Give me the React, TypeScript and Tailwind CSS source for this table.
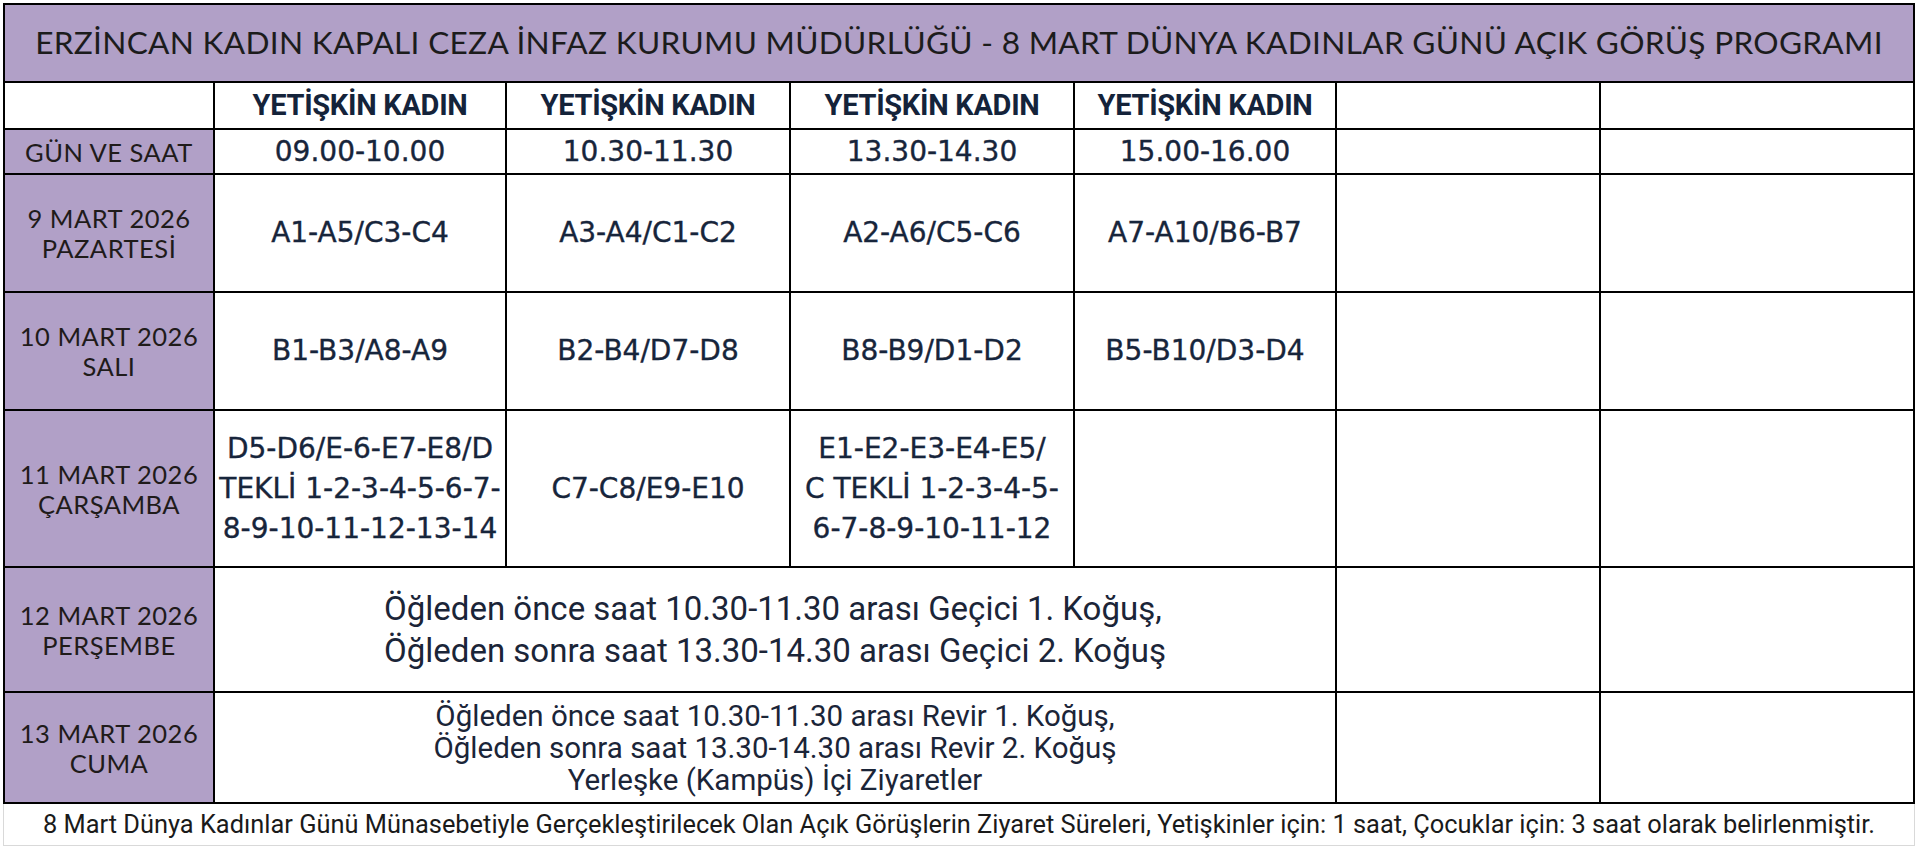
import React from "react";

const slots = ["09.00-10.00", "10.30-11.30", "13.30-14.30", "15.00-16.00"];

const days = [
  { date: "9 MART 2026", name: "PAZARTESİ", groups: ["A1-A5/C3-C4", "A3-A4/C1-C2", "A2-A6/C5-C6", "A7-A10/B6-B7"] },
  { date: "10 MART 2026", name: "SALI", groups: ["B1-B3/A8-A9", "B2-B4/D7-D8", "B8-B9/D1-D2", "B5-B10/D3-D4"] },
];

const label = "font-['Lato',sans-serif] text-[25.5px] leading-[30px] text-[#1f1b1a] tracking-[0.5px]";
const body = "font-['DejaVu_Sans',sans-serif] text-[28px] text-[#17253b] [-webkit-text-stroke:0.35px_#17253b]";
const note = "font-['Roboto',sans-serif] text-[#1b2538]";

function Cell({ purple = false, className = "", children }: { purple?: boolean; className?: string; children?: React.ReactNode }) {
  return (
    <div className={`${purple ? "bg-[#b1a0c7]" : "bg-white"} flex items-center justify-center overflow-hidden ${className}`}>
      {children}
    </div>
  );
}

function DayCell({ date, name }: { date: string; name: string }) {
  return (
    <Cell purple className="flex-col">
      <span className={label}>{date}</span>
      <span className={label}>{name}</span>
    </Cell>
  );
}

export default function App() {
  return (
    <div className="min-h-screen bg-white pt-[3px] pl-[3px]">
      <div className="w-[1912px] grid grid-cols-[208px_290px_282px_282px_260px_262px_312px] grid-rows-[76px_45px_43px_116px_116px_155px_123px_109px] gap-[2px] bg-black p-[2px]">
        {/* title */}
        <Cell purple className="col-span-7">
          <h1 className="font-['Lato',sans-serif] text-[31.6px] text-[#1c1c1c] tracking-[0.3px]">
            ERZİNCAN KADIN KAPALI CEZA İNFAZ KURUMU MÜDÜRLÜĞÜ - 8 MART DÜNYA KADINLAR GÜNÜ AÇIK GÖRÜŞ PROGRAMI
          </h1>
        </Cell>

        {/* header */}
        <Cell />
        {slots.map((s) => (
          <Cell key={s}>
            <span className="font-['Roboto',sans-serif] font-bold text-[29px] text-[#14233a] tracking-[-0.3px]">
              YETİŞKİN KADIN
            </span>
          </Cell>
        ))}
        <Cell />
        <Cell />

        {/* times */}
        <Cell purple>
          <span className={label}>GÜN VE SAAT</span>
        </Cell>
        {slots.map((s) => (
          <Cell key={s}>
            <span className={body}>{s}</span>
          </Cell>
        ))}
        <Cell />
        <Cell />

        {days.map((d) => (
          <React.Fragment key={d.date}>
            <DayCell date={d.date} name={d.name} />
            {d.groups.map((g) => (
              <Cell key={g}>
                <span className={body}>{g}</span>
              </Cell>
            ))}
            <Cell />
            <Cell />
          </React.Fragment>
        ))}

        {/* 11 mart */}
        <DayCell date="11 MART 2026" name="ÇARŞAMBA" />
        <Cell className="flex-col leading-[40px]">
          <span className={`${body} whitespace-nowrap`}>D5-D6/E-6-E7-E8/D</span>
          <span className={`${body} whitespace-nowrap`}>TEKLİ 1-2-3-4-5-6-7-</span>
          <span className={`${body} whitespace-nowrap`}>8-9-10-11-12-13-14</span>
        </Cell>
        <Cell>
          <span className={body}>C7-C8/E9-E10</span>
        </Cell>
        <Cell className="flex-col leading-[40px]">
          <span className={`${body} whitespace-nowrap`}>E1-E2-E3-E4-E5/</span>
          <span className={`${body} whitespace-nowrap`}>C TEKLİ 1-2-3-4-5-</span>
          <span className={`${body} whitespace-nowrap`}>6-7-8-9-10-11-12</span>
        </Cell>
        <Cell />
        <Cell />
        <Cell />

        {/* 12 mart */}
        <DayCell date="12 MART 2026" name="PERŞEMBE" />
        <Cell className="col-span-4">
          <div className={`${note} text-[33px] leading-[42px] text-left`}>
            <p>Öğleden önce saat 10.30-11.30 arası Geçici 1. Koğuş,</p>
            <p>Öğleden sonra saat 13.30-14.30 arası Geçici 2. Koğuş</p>
          </div>
        </Cell>
        <Cell />
        <Cell />

        {/* 13 mart */}
        <DayCell date="13 MART 2026" name="CUMA" />
        <Cell className="col-span-4">
          <div className={`${note} text-[29.5px] leading-[32px] text-center`}>
            <p>Öğleden önce saat 10.30-11.30 arası Revir 1. Koğuş,</p>
            <p>Öğleden sonra saat 13.30-14.30 arası Revir 2. Koğuş</p>
            <p>Yerleşke (Kampüs) İçi Ziyaretler</p>
          </div>
        </Cell>
        <Cell />
        <Cell />
      </div>

      <div className="w-[1912px] h-[42px] flex items-center justify-center border-x border-b border-[#d9d9d9]">
        <p className="font-['Roboto',sans-serif] text-[25.4px] text-[#1a1a1a]">
          8 Mart Dünya Kadınlar Günü Münasebetiyle Gerçekleştirilecek Olan Açık Görüşlerin Ziyaret Süreleri, Yetişkinler için: 1 saat, Çocuklar için: 3 saat olarak belirlenmiştir.
        </p>
      </div>
    </div>
  );
}
